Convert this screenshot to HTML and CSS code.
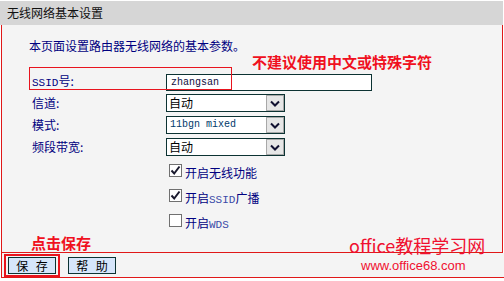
FILE: index.html
```html
<!DOCTYPE html>
<html lang="zh-CN">
<head>
<meta charset="utf-8">
<title>无线网络基本设置</title>
<link rel="stylesheet" href="styles.css">
</head>
<body>
<div class="panel">
  <div class="head">无线网络基本设置</div>
  <div class="body">
    <p class="intro">本页面设置路由器无线网络的基本参数。</p>
    <div class="tip">不建议使用中文或特殊字符</div>
    <div class="form">
      <div class="row">
        <span class="label"><span class="lat">SSID</span>号:</span>
        <div class="field"><div class="input">zhangsan</div></div>
        <span class="mark"></span>
      </div>
      <div class="row">
        <span class="label">信道:</span>
        <div class="field"><div class="select"><span class="val">自动</span><span class="arrow"><svg width="10" height="7" viewBox="0 0 10 7"><path d="M1 1.5 L5 5.5 L9 1.5" fill="none" stroke="#101030" stroke-width="2"/></svg></span></div></div>
      </div>
      <div class="row">
        <span class="label">模式:</span>
        <div class="field"><div class="select"><span class="val mono">11bgn mixed</span><span class="arrow"><svg width="10" height="7" viewBox="0 0 10 7"><path d="M1 1.5 L5 5.5 L9 1.5" fill="none" stroke="#101030" stroke-width="2"/></svg></span></div></div>
      </div>
      <div class="row">
        <span class="label">频段带宽:</span>
        <div class="field"><div class="select"><span class="val">自动</span><span class="arrow"><svg width="10" height="7" viewBox="0 0 10 7"><path d="M1 1.5 L5 5.5 L9 1.5" fill="none" stroke="#101030" stroke-width="2"/></svg></span></div></div>
      </div>
    </div>
    <div class="checks">
      <div class="check"><span class="box"><svg width="11" height="11" viewBox="0 0 11 11"><path d="M1.5 5.5 L4.2 8.5 L9.5 1.5" fill="none" stroke="#1a1a2e" stroke-width="2"/></svg></span><span class="ctext">开启无线功能</span></div>
      <div class="check"><span class="box"><svg width="11" height="11" viewBox="0 0 11 11"><path d="M1.5 5.5 L4.2 8.5 L9.5 1.5" fill="none" stroke="#1a1a2e" stroke-width="2"/></svg></span><span class="ctext">开启<span class="lat light">SSID</span>广播</span></div>
      <div class="check"><span class="box"></span><span class="ctext">开启<span class="lat light">WDS</span></span></div>
    </div>
    <div class="save-tip">点击保存</div>
  </div>
  <div class="bar">
    <span class="btn-wrap"><button class="btn">保 存</button></span>
    <button class="btn">帮 助</button>
  </div>
  <div class="watermark">office教程学习网</div>
  <div class="url">www.office68.com</div>
</div>
</body>
</html>
```
FILE: styles.css
```css
html, body {
  margin: 0;
  padding: 0;
  background: #ffffff;
}
body {
  font-family: "Noto Sans CJK SC", sans-serif;
  font-size: 12px;
}
.panel {
  position: relative;
  width: 503px;
  margin-top: 1px;
}
.head {
  height: 24px;
  line-height: 24px;
  background: #d6d6d6;
  padding-left: 7px;
  color: #111;
  font-size: 12px;
}
.body {
  margin-left: 1px;
  width: 500px;
  border-left: 1px solid #e01818;
  border-right: 1px solid #e01818;
  border-bottom: 1px solid #e01818;
  background: #f4f4f4;
}
.intro {
  margin: 0;
  padding: 13px 0 0 27px;
  line-height: 15px;
  color: #000080;
}
.tip {
  padding-left: 250px;
  line-height: 17px;
  height: 17px;
  font-size: 15px;
  font-weight: bold;
  color: #f01020;
}
.form {
  padding-left: 30px;
}
.row {
  position: relative;
  display: grid;
  grid-template-columns: 134px auto;
  align-items: center;
  height: 22px;
}
.label {
  color: #000080;
  line-height: 22px;
}
.lat {
  font-family: "Liberation Mono", monospace;
  font-size: 11px;
}
.lat.light {
  color: #3a4aa8;
}
.field {
  display: flex;
  align-items: center;
}
.input {
  box-sizing: border-box;
  width: 206px;
  height: 17px;
  border: 1px solid #0c3232;
  background: #fff;
  padding-left: 4px;
  font-family: "Liberation Mono", monospace;
  font-size: 10px;
  line-height: 15px;
  color: #101040;
}
.mark {
  position: absolute;
  left: -3px;
  top: -3px;
  width: 201px;
  height: 21px;
  border: 1px solid #e8141e;
}
.select {
  box-sizing: border-box;
  width: 119px;
  height: 18px;
  border: 1px solid #0c3232;
  background: #fff;
  display: flex;
  align-items: stretch;
}
.val {
  flex: 1;
  padding-left: 2px;
  line-height: 16px;
  font-size: 12px;
  color: #000;
}
.val.mono {
  font-family: "Liberation Mono", monospace;
  font-size: 10px;
  color: #003a6a;
  padding-left: 3px;
}
.arrow {
  box-sizing: border-box;
  width: 18px;
  background: #e6e6e6;
  border: 1px solid #a8a8a8;
  display: flex;
  align-items: center;
  justify-content: center;
}
.checks {
  padding-left: 167px;
}
.check {
  height: 25px;
  display: flex;
  align-items: center;
}
.box {
  box-sizing: border-box;
  width: 13px;
  height: 13px;
  border: 1px solid #707070;
  background: #fff;
  display: flex;
  align-items: center;
  justify-content: center;
}
.ctext {
  margin-left: 3px;
  margin-top: 3px;
  color: #000080;
}
.save-tip {
  padding-left: 29px;
  height: 19px;
  line-height: 19px;
  font-size: 15px;
  font-weight: bold;
  color: #f01020;
}
.bar {
  margin-left: 1px;
  width: 500px;
  height: 20px;
  border-left: 1px solid #e01818;
  border-right: 1px solid #e01818;
  border-bottom: 1px solid #e01818;
  background: #f4f4f4;
  display: flex;
  align-items: flex-start;
  gap: 12px;
  padding-top: 4px;
  padding-left: 6px;
  box-sizing: content-box;
}
.btn-wrap {
  position: relative;
  display: flex;
}
.btn-wrap::after {
  content: "";
  position: absolute;
  left: -4px;
  top: -3px;
  right: -4px;
  bottom: -3px;
  border: 2px solid #e8141e;
}
.btn {
  box-sizing: border-box;
  width: 48px;
  height: 17px;
  margin: 0;
  padding: 0;
  border: 1px solid #0c3232;
  background: #d6e6fb;
  font-family: "Noto Sans CJK SC", sans-serif;
  font-size: 12px;
  line-height: 15px;
  color: #000;
  word-spacing: 5px;
}
.watermark {
  position: absolute;
  left: 349px;
  top: 234px;
  font-size: 18px;
  line-height: 20px;
  color: #f01030;
}
.url {
  position: absolute;
  left: 361px;
  top: 258px;
  font-family: "Liberation Sans", sans-serif;
  font-size: 13px;
  line-height: 14px;
  color: #f01030;
}
```
